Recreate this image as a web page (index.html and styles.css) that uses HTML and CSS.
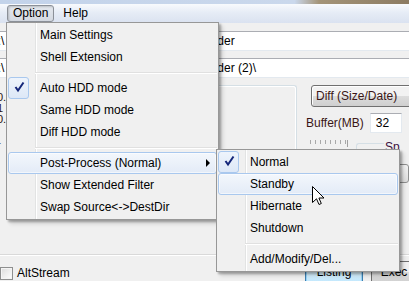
FILE: index.html
```html
<!doctype html>
<html lang="en">
<head>
<meta charset="utf-8">
<title>Option menu</title>
<link rel="stylesheet" href="styles.css">
</head>
<body>

<div class="screen">
  <div class="caption"></div>

  <!-- menu bar -->
  <div class="menubar">
    <span class="mb open">Option</span>
    <span class="mb">Help</span>
  </div>

  <!-- main window (mostly covered by the menus) -->
  <div class="client">
    <div class="path"><span class="lead">C:\</span><span class="tail">New Folder</span></div>
    <div class="path"><span class="lead">D:\</span><span class="tail">New Folder (2)\</span></div>

    <div class="mid">
      <div class="frag">
        <span>0.</span>
        <span>1</span>
        <span>0.</span>
        <span class="last">r</span>
      </div>
      <div class="group"></div>
      <div class="side">
        <div class="combo">Diff (Size/Date)</div>
        <div class="buffer">
          <span>Buffer(MB)</span>
          <span class="num">32</span>
        </div>
        <div class="row3">
          <div class="ticks"></div>
          <div class="spgroup">
            <span class="legend">Sp</span>
            <div class="mini"></div>
          </div>
        </div>
      </div>
    </div>

    <div class="rule"></div>

    <div class="bottom">
      <label class="alt"><span class="box"></span>AltStream</label>
      <span class="btn listing">Listing</span>
      <span class="btn exec">Exec</span>
    </div>
  </div>

  <!-- Option drop-down -->
  <div class="menu main">
    <div class="item">Main Settings</div>
    <div class="item">Shell Extension</div>
    <div class="sep"></div>
    <div class="item"><span class="check"><svg width="21" height="22"><path d="M7.5 10 L10 13.5 L15.5 5.5"/></svg></span>Auto HDD mode</div>
    <div class="item">Same HDD mode</div>
    <div class="item">Diff HDD mode</div>
    <div class="sep"></div>
    <div class="item hot">Post-Process (Normal)<span class="arrow"></span></div>
    <div class="item">Show Extended Filter</div>
    <div class="item">Swap Source&lt;-&gt;DestDir</div>
  </div>

  <!-- Post-Process sub menu -->
  <div class="menu sub">
    <div class="item"><span class="check"><svg width="21" height="22"><path d="M7.5 10 L10 13.5 L15.5 5.5"/></svg></span>Normal</div>
    <div class="item hot">Standby</div>
    <div class="item">Hibernate</div>
    <div class="item">Shutdown</div>
    <div class="sep"></div>
    <div class="item">Add/Modify/Del...</div>
  </div>

  <svg class="cursor" width="14" height="21" viewBox="0 0 14 21">
    <path d="M0.5 0.5 V16.5 L4.5 12.8 L7 18.5 L9.3 17.5 L6.9 12 H12 Z"/>
  </svg>
</div>

</body>
</html>
```

FILE: styles.css
```css
:root{
  --face:   #f0f0f0;   /* window / menu face */
  --txt:    #000;
  --dim:    #3a1616;   /* dialog labels */
  --line:   #d5dfe5;   /* group box edge */
  --hot-bd: #a9c8ee;   /* highlighted item */
}

* {
  box-sizing: border-box;
}
body {
  margin: 0;
}

.screen {
  position: relative;
  width: 409px;
  height: 281px;
  overflow: hidden;
  background: var(--face);
  font: 12px "Liberation Sans", Arial, sans-serif;
  color: var(--txt);
}

/* ── caption strip + menu bar ─────────────────────────────────── */
.caption {
  height: 4px;
  background: linear-gradient(90deg, #c3d3ea 0, #cad8ec 72%, #a49478 78%, #8c7b62 100%);
}
.menubar {
  height: 19px;
  display: flex;
  align-items: center;
  gap: 3px;
  padding-left: 7px;
  background: linear-gradient(#f8fafd, #e6ecf6 45%, #dae2f0);
}
.mb {
  height: 17px;
  line-height: 15px;
  padding: 0 5px;
  border: 1px solid transparent;
  border-radius: 3px;
}
.mb.open {
  border-color: #8b9098;
  background: linear-gradient(#e4e8ee, #d4d9e1);
  box-shadow: inset 1px 1px 2px rgba(0,0,0,.18);
}

/* ── dialog behind the menus ──────────────────────────────────── */
.client {
  height: 258px;
  padding-top: 8px;
}
.path {
  height: 20px;
  margin: 0 -10px 7px -13px;
  padding-left: 1px;
  line-height: 18px;
  background: #fff;
  border: 1px solid #abadb3;
  border-color: #abadb3 #e3e9ef #e3e9ef #e2e3ea;
  white-space: nowrap;
}
.path .tail {
  margin-left: 169px;
}

.mid {
  display: grid;
  grid-template-columns: 6px 1fr 104px;
  height: 169px;
  margin-top: 3px;
}
.frag {
  display: flex;
  flex-direction: column;
  padding-top: 7px;
  margin-left: -3px;
  font-size: 11px;
  line-height: 11px;
  color: #2a1010;
  white-space: nowrap;
}
.frag .last {
  margin-top: 15px;
}
.group {
  margin: 0 8px 0 209px;
  border-top: 1px solid var(--line);
  border-right: 1px solid var(--line);
  border-top-right-radius: 3px;
  box-shadow: inset -1px 1px 0 #fff;
}

.side {
  display: flex;
  flex-direction: column;
  color: var(--dim);
}
.combo {
  width: 110px;
  height: 22px;
  margin-left: 6px;
  padding-left: 4px;
  line-height: 20px;
  border: 1px solid #707070;
  border-radius: 3px 0 0 3px;
  background: linear-gradient(#f2f2f2 50%, #dddddd 50%, #cfcfcf);
  box-shadow: inset 1px 1px 0 #fff;
}
.buffer {
  display: flex;
  align-items: center;
  height: 20px;
  margin-top: 6px;
  padding-left: 1px;
}
.buffer .num {
  width: 32px;
  height: 20px;
  margin-left: 6px;
  padding-left: 5px;
  line-height: 18px;
  color: var(--txt);
  background: #fff;
  border: 1px solid #e3e9ef;
  border-top-color: #abadb3;
}
.row3 {
  display: flex;
  margin-top: 7px;
}
.ticks {
  width: 54px;
  height: 7px;
  margin-left: 5px;
  background:
    linear-gradient(#a0a0a0, #a0a0a0) right top / 1px 7px no-repeat,
    repeating-linear-gradient(90deg, #a8a8a8 0 1px, transparent 1px 5px) left top / 100% 4px no-repeat;
}
.spgroup {
  flex: 1;
  height: 100px;
  margin: 3px 0 0 8px;
  border-top: 1px solid var(--line);
  border-left: 1px solid var(--line);
  border-top-left-radius: 3px;
}
.legend {
  display: block;
  margin: -3px 0 0 27px;
  padding-left: 1px;
  line-height: 13px;
  background: var(--face);
  color: #3c1040;
}
.mini {
  width: 20px;
  height: 19px;
  margin: 10px 0 0 32px;
  border: 1px solid #8e8f8f;
  border-radius: 3px;
  background: linear-gradient(#f4f4f4, #dedede);
}

.rule {
  border-top: 1px solid #d9d9d9;
  border-bottom: 1px solid #fff;
}
.bottom {
  display: flex;
  align-items: flex-start;
  margin-top: 5px;
}
.alt {
  flex: 1;
  display: flex;
  align-items: center;
  gap: 4px;
  margin-top: 6px;
  line-height: 13px;
}
.alt .box {
  width: 13px;
  height: 13px;
  border: 1px solid #8e8f8f;
  background: linear-gradient(135deg, #dcdcdc, #fff);
  box-shadow: inset 0 0 0 1px #f4f4f4;
}
.btn {
  height: 23px;
  line-height: 21px;
  text-align: center;
  border: 1px solid #707070;
  border-radius: 3px;
  background: linear-gradient(#f2f2f2 50%, #dddddd 50%, #cfcfcf);
}
.btn.listing {
  width: 58px;
  border-color: #3c7fb1;
  background: linear-gradient(#eaf6fd 50%, #d9f0fc 50%, #bee6fd);
  box-shadow: inset 0 0 0 1px #9ad3f5;
}
.btn.exec {
  width: 60px;
  margin: 0 -22px 0 8px;
  padding-right: 14px;
}

/* ── drop-down menus ──────────────────────────────────────────── */
.menu {
  position: absolute;
  padding: 1px;
  border: 1px solid #979797;
  background:
    linear-gradient(90deg, transparent 28px, #e2e3e3 28px 29px, #fff 29px 30px, transparent 30px),
    var(--face);
  box-shadow: 2px 2px 2px rgba(0,0,0,.28), 4px 4px 4px rgba(0,0,0,.12);
}
.menu.main {
  left: 6px;
  top: 22px;
  width: 213px;
}
.menu.sub {
  left: 216px;
  top: 149px;
  width: 184px;
}
.item {
  position: relative;
  height: 22px;
  display: flex;
  align-items: center;
  padding-left: 31px;
  border: 1px solid transparent;
  border-radius: 3px;
  white-space: nowrap;
}
.item.hot {
  border-color: var(--hot-bd);
  background: linear-gradient(#f3f7fc, #e3ebf7);
  box-shadow: inset 0 0 0 1px rgba(255,255,255,.55);
}
.check {
  position: absolute;
  left: -1px;
  top: -1px;
  width: 21px;
  height: 22px;
  border: 1px solid var(--hot-bd);
  border-radius: 3px;
  background: linear-gradient(#eef4fc, #dde8f7);
}
.check svg {
  position: absolute;
  left: -1px;
  top: -1px;
}
.check path {
  fill: none;
  stroke: #15277a;
  stroke-width: 2;
}
.arrow {
  position: absolute;
  right: 6px;
  top: 6px;
  border-left: 4px solid #000;
  border-top: 4px solid transparent;
  border-bottom: 4px solid transparent;
}
.sep {
  height: 9px;
  padding: 4px 0 0 27px;
}
.sep::after {
  content: "";
  display: block;
  border-top: 1px solid #e0e0e0;
  border-bottom: 1px solid #fff;
}

.cursor {
  position: absolute;
  left: 312px;
  top: 186px;
}
.cursor path {
  fill: #fff;
  stroke: #000;
  stroke-width: 1;
  stroke-linejoin: miter;
}
```
